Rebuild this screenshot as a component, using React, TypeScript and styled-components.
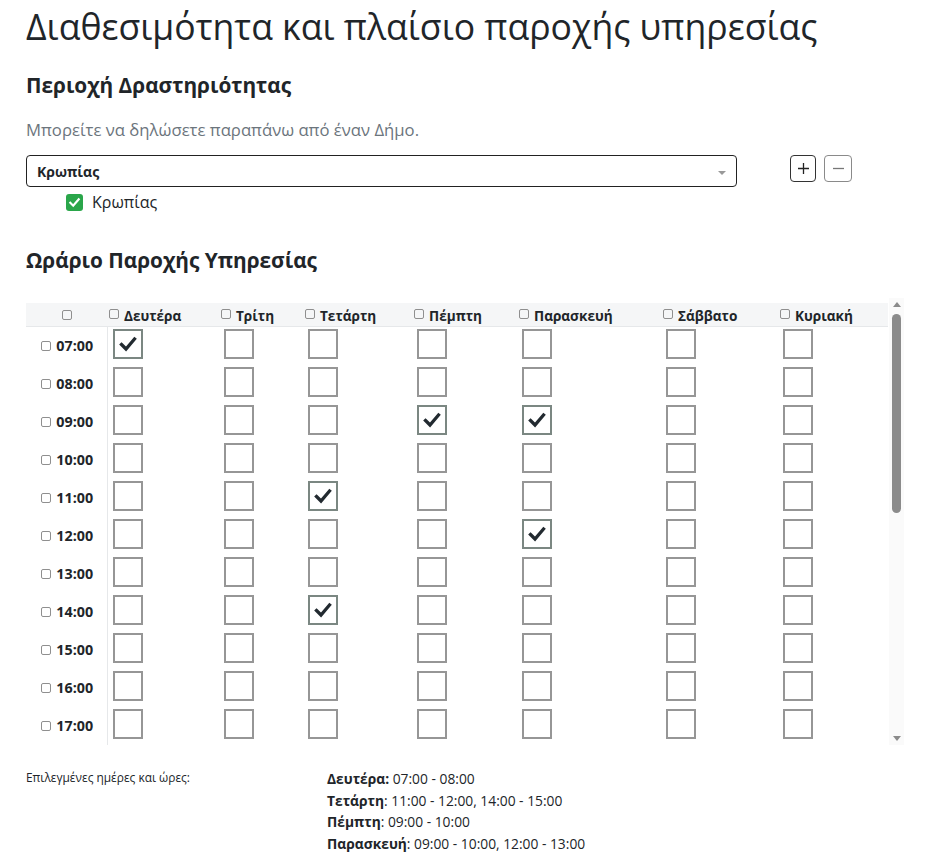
import React, { useState } from "react";
import styled, { createGlobalStyle } from "styled-components";

const GlobalStyle = createGlobalStyle`
    html, body {
        margin: 0;
        padding: 0;
        background: #fff;
    }
    body {
        font-family: "Open Sans", "Noto Sans", sans-serif;
        color: #212529;
    }
`;

const Page = styled.main`
    padding: 0 23px 0 26px;
`;

const Title = styled.h1`
    font-size: 35.6px;
    font-weight: 400;
    margin: 0;
    padding-top: 5px;
    line-height: 42px;
`;

const SectionTitle = styled.h2<{ $top: number }>`
    font-size: 20.8px;
    font-weight: 700;
    margin: ${(p) => p.$top}px 0 0;
    line-height: 28px;
`;

const Hint = styled.p`
    color: #6c757d;
    font-size: 16.7px;
    margin: 19px 0 0;
    line-height: 24px;
`;

const AreaRow = styled.div`
    display: flex;
    align-items: flex-start;
    margin-top: 13px;
`;

const Select = styled.div`
    flex: 0 0 711px;
    height: 32px;
    box-sizing: border-box;
    border: 1px solid #222;
    border-radius: 4px;
    display: flex;
    align-items: center;
    justify-content: space-between;
    padding: 0 10px;
    font-size: 14px;
    font-weight: 700;

    .arrow {
        width: 0;
        height: 0;
        border-left: 4px solid transparent;
        border-right: 4px solid transparent;
        border-top: 4px solid #999;
        margin-top: 3px;
    }
`;

const ButtonGroup = styled.div`
    display: flex;
    gap: 8px;
    margin-left: 53px;
`;

const SmallButton = styled.button<{ $muted?: boolean }>`
    width: ${(p) => (p.$muted ? 28 : 26)}px;
    height: 27px;
    padding: 0;
    background: #fff;
    border: 1px solid ${(p) => (p.$muted ? "#8a8a8a" : "#333")};
    border-radius: 4px;
    color: ${(p) => (p.$muted ? "#777" : "#222")};
    display: flex;
    align-items: center;
    justify-content: center;
`;

const ChosenArea = styled.label`
    display: flex;
    align-items: center;
    gap: 9px;
    margin: 4px 0 0 40px;
    font-size: 16px;
    line-height: 22px;
`;

const GreenBox = styled.span`
    width: 17px;
    height: 17px;
    border-radius: 3px;
    background: #2aa64a;
    display: flex;
    align-items: center;
    justify-content: center;
`;

const ScrollFrame = styled.div`
    display: flex;
    margin-top: 24px;
    height: 447px;
`;

const Viewport = styled.div`
    flex: 1;
    overflow-y: auto;
    padding-top: 5px;
    box-sizing: border-box;
    scrollbar-width: none;
`;

const Rail = styled.div`
    flex: 0 0 15px;
    background: #fafafa;
    display: flex;
    flex-direction: column;
    align-items: center;
`;

const RailArrow = styled.span<{ $down?: boolean }>`
    width: 0;
    height: 0;
    margin: ${(p) => (p.$down ? "auto 0 4px" : "4px 0 0")};
    border-left: 4px solid transparent;
    border-right: 4px solid transparent;
    ${(p) => (p.$down ? "border-top" : "border-bottom")}: 5px solid #8b8b8b;
`;

const Thumb = styled.span`
    width: 9px;
    height: 199px;
    border-radius: 5px;
    background: #8b8b8b;
    flex-shrink: 0;
`;

const Table = styled.table`
    width: 862px;
    border-collapse: collapse;
    table-layout: fixed;
`;

const HeadCell = styled.th<{ $center?: boolean }>`
    position: sticky;
    top: 0;
    background: #f5f6f7;
    border-bottom: 1px solid #e6e8ea;
    height: 23px;
    padding: 0 2px;
    text-align: ${(p) => (p.$center ? "center" : "left")};
    font-size: 13.6px;
    font-weight: 700;
    white-space: nowrap;
    box-sizing: border-box;

    span {
        vertical-align: middle;
    }
`;

const MiniBox = styled.span<{ $alone?: boolean }>`
    display: inline-block;
    width: 8px;
    height: 8px;
    border: 1px solid #8f8f8f;
    border-radius: 2px;
    margin-right: ${(p) => (p.$alone ? 0 : 5)}px;
    vertical-align: middle;
    position: relative;
    top: -1px;
`;

const TimeCell = styled.td`
    text-align: center;
    font-size: 14.3px;
    font-weight: 700;
    border-right: 1px solid #e6e8ea;
    padding: 0 0 0 2px;
    height: 38px;
    box-sizing: border-box;
    white-space: nowrap;
`;

const SlotCell = styled.td`
    padding: 2px 0 6px 5px;
    height: 38px;
    box-sizing: border-box;
    vertical-align: top;
`;

const Slot = styled.button<{ $on: boolean }>`
    display: flex;
    align-items: center;
    justify-content: center;
    width: 30px;
    height: 30px;
    padding: 0;
    box-sizing: border-box;
    background: #fff;
    border: 2px solid ${(p) => (p.$on ? "#7b8782" : "#969696")};
    cursor: pointer;
`;

const Summary = styled.div`
    display: grid;
    grid-template-columns: 301px 1fr;
    margin-top: 23px;
    font-size: 13.8px;
    line-height: 21.7px;
`;

const SummaryLabel = styled.div`
    font-size: 11.9px;
    line-height: 21.7px;
    margin-top: -1px;
`;

const SummaryLine = styled.div`
    white-space: nowrap;

    b {
        font-weight: 700;
    }
`;

const days = ["Δευτέρα", "Τρίτη", "Τετάρτη", "Πέμπτη", "Παρασκευή", "Σάββατο", "Κυριακή"];
const colWidths = [81, 112, 84, 109, 105, 144, 117, 110];
const hours = Array.from({ length: 14 }, (_, i) => `${String(7 + i).padStart(2, "0")}:00`);

const initial: Record<string, boolean> = {
    "0-0": true,
    "3-2": true,
    "4-2": true,
    "2-4": true,
    "4-5": true,
    "2-7": true,
};

const Check = ({ size = 20, color = "#222a30" }: { size?: number; color?: string }) => (
    <svg width={size} height={size} viewBox="0 0 20 20">
        <polyline points="3.5,10.5 8,15 16.5,5" fill="none" stroke={color} strokeWidth="3.3" strokeLinecap="square" />
    </svg>
);

export default function App() {
    const [picked, setPicked] = useState(initial);
    const [scroll, setScroll] = useState(0);

    const toggle = (d: number, h: number) =>
        setPicked((p) => ({ ...p, [`${d}-${h}`]: !p[`${d}-${h}`] }));

    const onScroll = (e: React.UIEvent<HTMLDivElement>) => {
        const el = e.currentTarget;
        const max = el.scrollHeight - el.clientHeight;
        setScroll(max > 0 ? el.scrollTop / max : 0);
    };

    return (
        <Page>
            <GlobalStyle />
            <Title>Διαθεσιμότητα και πλαίσιο παροχής υπηρεσίας</Title>

            <SectionTitle $top={24}>Περιοχή Δραστηριότητας</SectionTitle>
            <Hint>Μπορείτε να δηλώσετε παραπάνω από έναν Δήμο.</Hint>

            <AreaRow>
                <Select>
                    <span>Κρωπίας</span>
                    <span className="arrow" />
                </Select>
                <ButtonGroup>
                    <SmallButton>
                        <svg width="13" height="13" viewBox="0 0 13 13">
                            <path d="M6.5 1v11M1 6.5h11" stroke="#222" strokeWidth="1.3" />
                        </svg>
                    </SmallButton>
                    <SmallButton $muted>
                        <svg width="13" height="13" viewBox="0 0 13 13">
                            <path d="M1 6.5h11" stroke="#777" strokeWidth="1.3" />
                        </svg>
                    </SmallButton>
                </ButtonGroup>
            </AreaRow>

            <ChosenArea>
                <GreenBox>
                    <Check size={13} color="#fff" />
                </GreenBox>
                Κρωπίας
            </ChosenArea>

            <SectionTitle $top={33}>Ωράριο Παροχής Υπηρεσίας</SectionTitle>

            <ScrollFrame>
                <Viewport onScroll={onScroll}>
                    <Table>
                        <colgroup>
                            {colWidths.map((w, i) => (
                                <col key={i} style={{ width: w }} />
                            ))}
                        </colgroup>
                        <thead>
                            <tr>
                                <HeadCell $center>
                                    <MiniBox $alone />
                                </HeadCell>
                                {days.map((d) => (
                                    <HeadCell key={d}>
                                        <MiniBox />
                                        <span>{d}</span>
                                    </HeadCell>
                                ))}
                            </tr>
                        </thead>
                        <tbody>
                            {hours.map((h, hi) => (
                                <tr key={h}>
                                    <TimeCell>
                                        <MiniBox />
                                        {h}
                                    </TimeCell>
                                    {days.map((d, di) => {
                                        const on = !!picked[`${di}-${hi}`];
                                        return (
                                            <SlotCell key={d}>
                                                <Slot $on={on} onClick={() => toggle(di, hi)}>
                                                    {on && <Check />}
                                                </Slot>
                                            </SlotCell>
                                        );
                                    })}
                                </tr>
                            ))}
                        </tbody>
                    </Table>
                </Viewport>
                <Rail>
                    <RailArrow />
                    <Thumb style={{ marginTop: 7 + scroll * 216 }} />
                    <RailArrow $down />
                </Rail>
            </ScrollFrame>

            <Summary>
                <SummaryLabel>Επιλεγμένες ημέρες και ώρες:</SummaryLabel>
                <div>
                    <SummaryLine>
                        <b>Δευτέρα:</b> 07:00 - 08:00
                    </SummaryLine>
                    <SummaryLine>
                        <b>Τετάρτη</b>: 11:00 - 12:00, 14:00 - 15:00
                    </SummaryLine>
                    <SummaryLine>
                        <b>Πέμπτη</b>: 09:00 - 10:00
                    </SummaryLine>
                    <SummaryLine>
                        <b>Παρασκευή</b>: 09:00 - 10:00, 12:00 - 13:00
                    </SummaryLine>
                </div>
            </Summary>
        </Page>
    );
}
